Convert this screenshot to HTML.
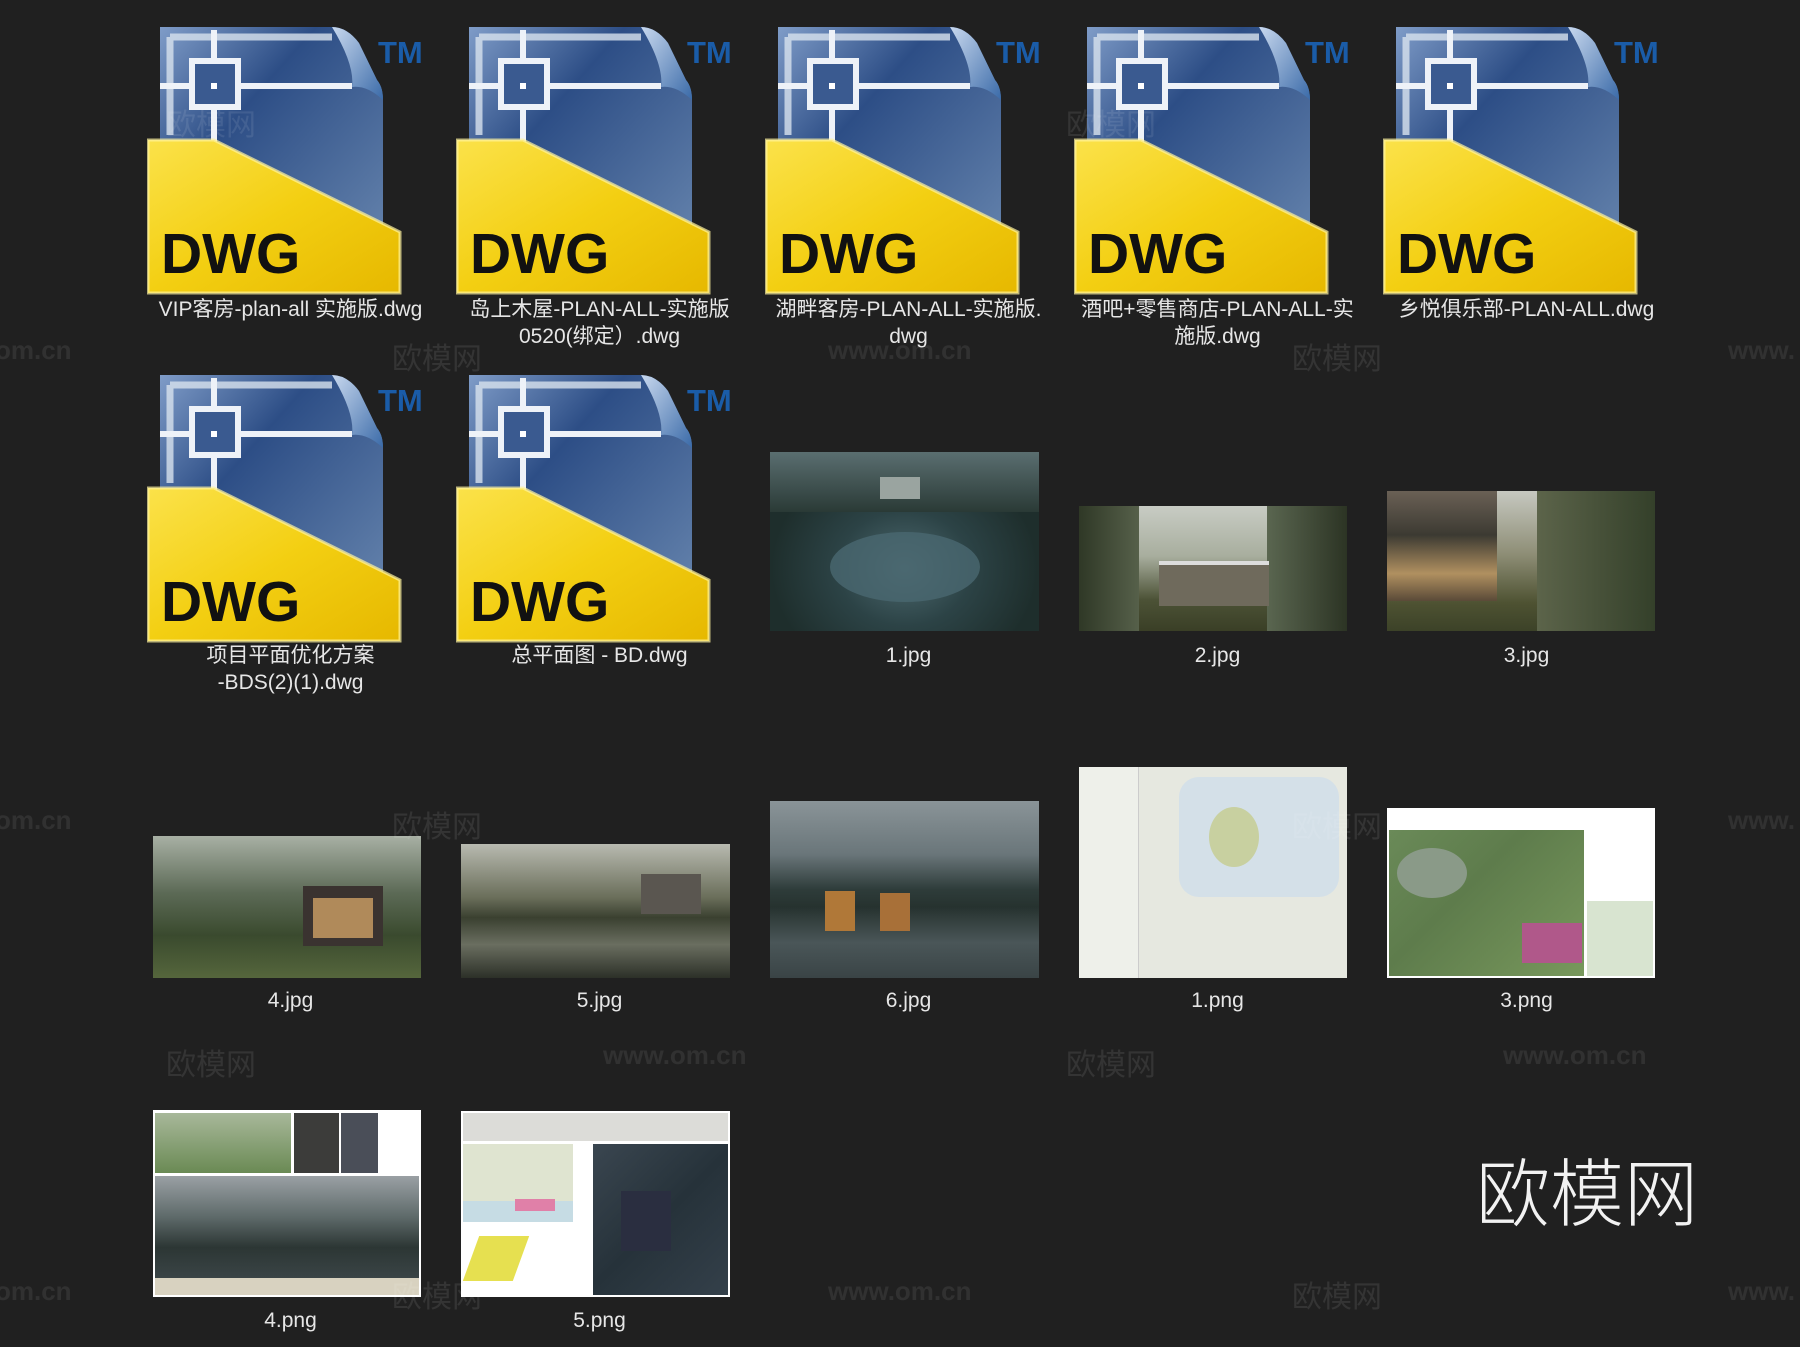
<!DOCTYPE html>
<html><head><meta charset="utf-8">
<style>
*{margin:0;padding:0;box-sizing:border-box}
body{width:1800px;height:1347px;background:#202020;position:relative;overflow:hidden;font-family:"Liberation Sans","Noto Sans CJK SC",sans-serif}
.ic{position:absolute;width:283px;height:270px}
.lb{position:absolute;width:309px;text-align:center;color:#e6e6e6;font-size:21px;line-height:27px}
.th{position:absolute;overflow:hidden}
.wm{position:absolute;color:rgba(255,255,255,0.09);font-size:30px;font-family:"Liberation Sans","Noto Sans CJK SC",sans-serif}
.ww{position:absolute;color:rgba(255,255,255,0.08);font-size:26px;font-weight:bold}
</style></head><body>
<svg width="0" height="0" style="position:absolute">
<defs>
<linearGradient id="bl" x1="0" y1="0" x2="1" y2="1"><stop offset="0" stop-color="#7f9cc8"/><stop offset=".35" stop-color="#2d4e86"/><stop offset="1" stop-color="#6a88b0"/></linearGradient>
<linearGradient id="yl" x1="0" y1="0" x2="1" y2="1"><stop offset="0" stop-color="#fbe24a"/><stop offset=".5" stop-color="#f3cf12"/><stop offset="1" stop-color="#e6b800"/></linearGradient>
<linearGradient id="cu" x1="0" y1="0" x2="1" y2="1"><stop offset="0" stop-color="#c8d8ee"/><stop offset="1" stop-color="#3a6aa8"/></linearGradient>
<g id="dwg">
<path d="M13,2 H185 Q200,2 212,18 L230,55 Q236,62 236,75 V252 H13 Z" fill="url(#bl)"/>
<path d="M185,2 Q200,2 212,18 L230,55 Q236,62 236,75 Q220,60 205,62 Q208,40 185,2 Z" fill="url(#cu)"/>
<path d="M23,12 H185 M23,12 V110" stroke="#d8e2ee" stroke-width="7" fill="none" opacity=".8"/>
<path d="M67,5 V118 M13,61 H205" stroke="#eef2f8" stroke-width="6"/>
<rect x="45" y="36" width="46" height="46" fill="#3a5a90" stroke="#eef2f8" stroke-width="6"/>
<rect x="64" y="58" width="6" height="6" fill="#fff"/>
<path d="M1,115 H67 L253,207 V268 H1 Z" fill="url(#yl)"/>
<path d="M1,115 H67 L253,207 V268 H1 Z" fill="none" stroke="#fff3a0" stroke-width="3" opacity=".7"/>
<text x="14" y="248" font-family="Liberation Sans" font-weight="bold" font-size="57" fill="#111">DWG</text>
<text x="231" y="38" font-family="Liberation Sans" font-weight="bold" font-size="31" fill="#1a5ca8">TM</text>
</g>
</defs></svg>

<svg class="ic" style="left:147px;top:25px"><use href="#dwg"/></svg>
<svg class="ic" style="left:456px;top:25px"><use href="#dwg"/></svg>
<svg class="ic" style="left:765px;top:25px"><use href="#dwg"/></svg>
<svg class="ic" style="left:1074px;top:25px"><use href="#dwg"/></svg>
<svg class="ic" style="left:1383px;top:25px"><use href="#dwg"/></svg>
<svg class="ic" style="left:147px;top:373px"><use href="#dwg"/></svg>
<svg class="ic" style="left:456px;top:373px"><use href="#dwg"/></svg>

<div class="lb" style="left:136px;top:296px">VIP客房-plan-all 实施版.dwg</div>
<div class="lb" style="left:445px;top:296px">岛上木屋-PLAN-ALL-实施版<br>0520(绑定）.dwg</div>
<div class="lb" style="left:754px;top:296px">湖畔客房-PLAN-ALL-实施版.<br>dwg</div>
<div class="lb" style="left:1063px;top:296px">酒吧+零售商店-PLAN-ALL-实<br>施版.dwg</div>
<div class="lb" style="left:1372px;top:296px">乡悦俱乐部-PLAN-ALL.dwg</div>
<div class="lb" style="left:136px;top:642px">项目平面优化方案<br>-BDS(2)(1).dwg</div>
<div class="lb" style="left:445px;top:642px">总平面图 - BD.dwg</div>

<div class="th" style="left:770px;top:452px;width:269px;height:179px;background:radial-gradient(ellipse at 50% 65%,#4e6a70 0,#2c4346 35%,#1e2e2c 70%),#223">
<div style="position:absolute;left:0;top:0;right:0;height:60px;background:linear-gradient(#5a6e70,#2a3a36)"></div>
<div style="position:absolute;left:60px;top:80px;width:150px;height:70px;border-radius:50%;background:#4a6870;opacity:.8"></div>
<div style="position:absolute;left:110px;top:25px;width:40px;height:22px;background:#9aa4a0"></div></div>
<div class="lb" style="left:754px;top:642px">1.jpg</div>

<div class="th" style="left:1079px;top:506px;width:268px;height:125px;background:linear-gradient(#c8ccc4 0,#a8ae9e 40%,#4c5236 75%,#3a3f26 100%)">
<div style="position:absolute;left:0;top:0;width:60px;height:125px;background:linear-gradient(90deg,#2f3826,#56604a)"></div>
<div style="position:absolute;right:0;top:0;width:80px;height:125px;background:linear-gradient(270deg,#2c3424,#5a6650)"></div>
<div style="position:absolute;left:80px;top:55px;width:110px;height:45px;background:#6f6a5c;border-top:4px solid #ddd"></div></div>
<div class="lb" style="left:1063px;top:642px">2.jpg</div>

<div class="th" style="left:1387px;top:491px;width:268px;height:140px;background:linear-gradient(#c6c8c0 0,#8e8e76 45%,#4e5232 80%,#3c4228 100%)">
<div style="position:absolute;left:0;top:0;width:110px;height:110px;background:linear-gradient(#6a6055,#3c3a32 40%,#b09060 75%,#5a4a38)"></div>
<div style="position:absolute;left:150px;top:0;width:118px;height:140px;background:linear-gradient(90deg,#5c644a,#34402a)"></div></div>
<div class="lb" style="left:1372px;top:642px">3.jpg</div>

<div class="th" style="left:153px;top:836px;width:268px;height:142px;background:linear-gradient(#a8b0a4 0,#5c6a56 40%,#3a4a2e 70%,#55663c 100%)">
<div style="position:absolute;left:150px;top:50px;width:80px;height:60px;background:#3a3330"></div>
<div style="position:absolute;left:160px;top:62px;width:60px;height:40px;background:#b08a5a"></div></div>
<div class="lb" style="left:136px;top:987px">4.jpg</div>

<div class="th" style="left:461px;top:844px;width:269px;height:134px;background:linear-gradient(#b8bab0 0,#6a6e5a 40%,#3a4030 55%,#6a6e60 75%,#2c3028 100%)">
<div style="position:absolute;left:180px;top:30px;width:60px;height:40px;background:#5a5650"></div></div>
<div class="lb" style="left:445px;top:987px">5.jpg</div>

<div class="th" style="left:770px;top:801px;width:269px;height:177px;background:linear-gradient(#8a9498 0,#6a767a 30%,#2e3c3a 50%,#26322f 60%,#4a5658 80%,#3a4446 100%)">
<div style="position:absolute;left:55px;top:90px;width:30px;height:40px;background:#b07838"></div>
<div style="position:absolute;left:110px;top:92px;width:30px;height:38px;background:#a87038"></div></div>
<div class="lb" style="left:754px;top:987px">6.jpg</div>

<div class="th" style="left:1079px;top:767px;width:268px;height:211px;background:#e6e8e0">
<div style="position:absolute;left:100px;top:10px;width:160px;height:120px;background:#d4e0e8;border-radius:20px"></div>
<div style="position:absolute;left:130px;top:40px;width:50px;height:60px;background:#c8d0a0;border-radius:50%"></div>
<div style="position:absolute;left:0;top:0;width:60px;height:211px;background:#eef0ea;border-right:1px solid #ccc"></div></div>
<div class="lb" style="left:1063px;top:987px">1.png</div>

<div class="th" style="left:1387px;top:808px;width:268px;height:170px;background:#fff">
<div style="position:absolute;left:2px;top:22px;width:195px;height:146px;background:linear-gradient(135deg,#6a8a58,#5e7c4c 40%,#78985c)"></div>
<div style="position:absolute;left:10px;top:40px;width:70px;height:50px;border-radius:50%;background:#8a9a88"></div>
<div style="position:absolute;left:135px;top:115px;width:60px;height:40px;background:#b0588a"></div>
<div style="position:absolute;left:200px;top:93px;width:66px;height:75px;background:#d8e4d0"></div></div>
<div class="lb" style="left:1372px;top:987px">3.png</div>

<div class="th" style="left:153px;top:1110px;width:268px;height:187px;background:#fff">
<div style="position:absolute;left:2px;top:3px;width:136px;height:60px;background:linear-gradient(#a8b89a,#6a8a54)"></div>
<div style="position:absolute;left:141px;top:3px;width:45px;height:60px;background:#3c3c3a"></div>
<div style="position:absolute;left:188px;top:3px;width:37px;height:60px;background:#4a4e58"></div>
<div style="position:absolute;left:2px;top:66px;width:264px;height:102px;background:linear-gradient(#9aa0a4,#5e6a6a 40%,#2c3634 70%,#3a4446)"></div>
<div style="position:absolute;left:2px;top:168px;width:264px;height:17px;background:#d8d2c0"></div></div>
<div class="lb" style="left:136px;top:1307px">4.png</div>

<div class="th" style="left:461px;top:1111px;width:269px;height:186px;background:#fff">
<div style="position:absolute;left:2px;top:2px;width:265px;height:28px;background:#dcdcd8"></div>
<div style="position:absolute;left:2px;top:33px;width:110px;height:78px;background:#dfe4d0"></div>
<div style="position:absolute;left:2px;top:90px;width:110px;height:21px;background:#c6dce4"></div>
<div style="position:absolute;left:54px;top:88px;width:40px;height:12px;background:#e080a8"></div>
<div style="position:absolute;left:132px;top:33px;width:135px;height:151px;background:linear-gradient(135deg,#3a4650,#26323a 50%,#34404a)"></div>
<div style="position:absolute;left:160px;top:80px;width:50px;height:60px;background:#2a2e40"></div>
<div style="position:absolute;left:10px;top:125px;width:50px;height:45px;background:#e6e050;transform:skew(-20deg)"></div></div>
<div class="lb" style="left:445px;top:1307px">5.png</div>

<div class="wm" style="left:166px;top:100px">欧模网</div>
<div class="wm" style="left:392px;top:334px">欧模网</div>
<div class="wm" style="left:1066px;top:100px">欧模网</div>
<div class="wm" style="left:1292px;top:334px">欧模网</div>
<div class="wm" style="left:392px;top:802px">欧模网</div>
<div class="wm" style="left:1292px;top:802px">欧模网</div>
<div class="wm" style="left:166px;top:1040px">欧模网</div>
<div class="wm" style="left:1066px;top:1040px">欧模网</div>
<div class="wm" style="left:392px;top:1272px">欧模网</div>
<div class="wm" style="left:1292px;top:1272px">欧模网</div>
<div class="ww" style="left:-5px;top:335px">om.cn</div>
<div class="ww" style="left:828px;top:335px">www.om.cn</div>
<div class="ww" style="left:1728px;top:335px">www.</div>
<div class="ww" style="left:-5px;top:805px">om.cn</div>
<div class="ww" style="left:1728px;top:805px">www.</div>
<div class="ww" style="left:603px;top:1040px">www.om.cn</div>
<div class="ww" style="left:1503px;top:1040px">www.om.cn</div>
<div class="ww" style="left:-5px;top:1276px">om.cn</div>
<div class="ww" style="left:828px;top:1276px">www.om.cn</div>
<div class="ww" style="left:1728px;top:1276px">www.</div>

<div style="position:absolute;left:1476px;top:1150px;font-size:74px;color:#f2f2f2;font-family:'Liberation Sans','Noto Sans CJK SC',sans-serif;font-weight:300;line-height:90px">欧模网</div>
</body></html>
